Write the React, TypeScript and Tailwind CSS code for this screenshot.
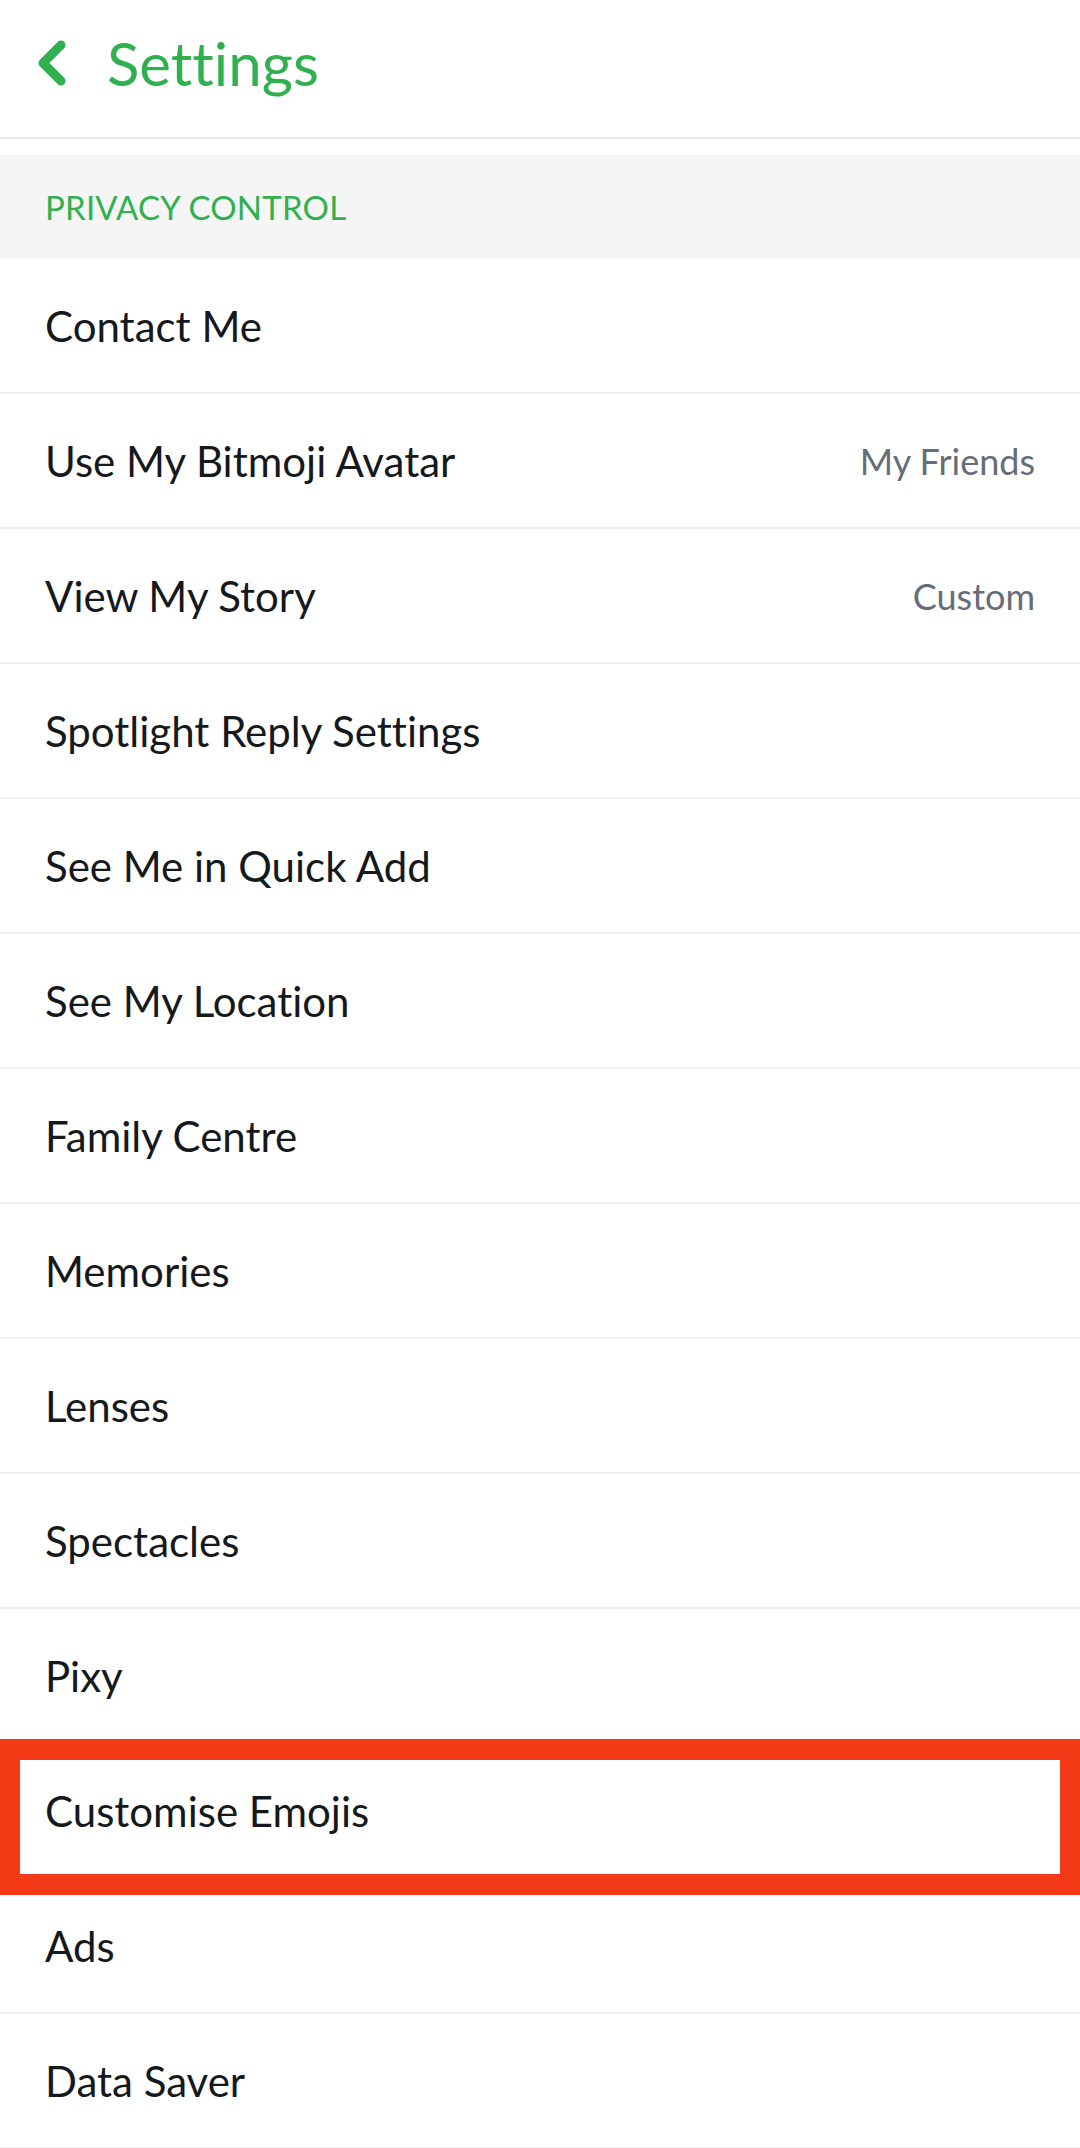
import React from 'react';

const rows: { label: string; value?: string }[] = [
  { label: 'Contact Me' },
  { label: 'Use My Bitmoji Avatar', value: 'My Friends' },
  { label: 'View My Story', value: 'Custom' },
  { label: 'Spotlight Reply Settings' },
  { label: 'See Me in Quick Add' },
  { label: 'See My Location' },
  { label: 'Family Centre' },
  { label: 'Memories' },
  { label: 'Lenses' },
  { label: 'Spectacles' },
  { label: 'Pixy' },
  { label: 'Customise Emojis' },
  { label: 'Ads' },
  { label: 'Data Saver' },
];

const App: React.FC = () => {
  return (
    <div className="w-[1080px] bg-white font-['Lato','Liberation_Sans',sans-serif] [font-variant-ligatures:none] overflow-hidden">
      {/* header */}
      <div className="h-[139px] border-b-2 border-[#e6e6e6] flex items-center pb-[12px]">
        <svg className="ml-[37px] w-[30px] h-[46px]" viewBox="0 0 30 46" fill="none">
          <polyline
            points="24,5 6,23 24,41"
            stroke="#31b04f"
            strokeWidth={9}
            strokeLinecap="round"
            strokeLinejoin="round"
          />
        </svg>
        <h1 className="ml-[40px] text-[60px] leading-none text-[#31b04f]">Settings</h1>
      </div>

      <div className="mt-4 h-[104px] bg-[#f5f5f6] flex items-center px-[45px]">
        <span className="text-[33px] leading-none text-[#31b04f] tracking-[0.2px]">PRIVACY CONTROL</span>
      </div>

      {rows.map((row) => (
        <div
          key={row.label}
          className="relative h-[135px] border-b-2 border-[#efefef] flex items-center justify-between px-[45px]"
        >
          <span className="text-[42px] leading-none text-[#16191c]">{row.label}</span>
          {row.value && (
            <span className="text-[36px] leading-none text-[#656d78]">{row.value}</span>
          )}
          {row.label === 'Customise Emojis' && (
            <div className="absolute left-0 right-0 top-[-5px] bottom-[-18px] border-x-[20px] border-y-[21px] border-[#f43a17] z-10" />
          )}
        </div>
      ))}
    </div>
  );
};

export default App;
